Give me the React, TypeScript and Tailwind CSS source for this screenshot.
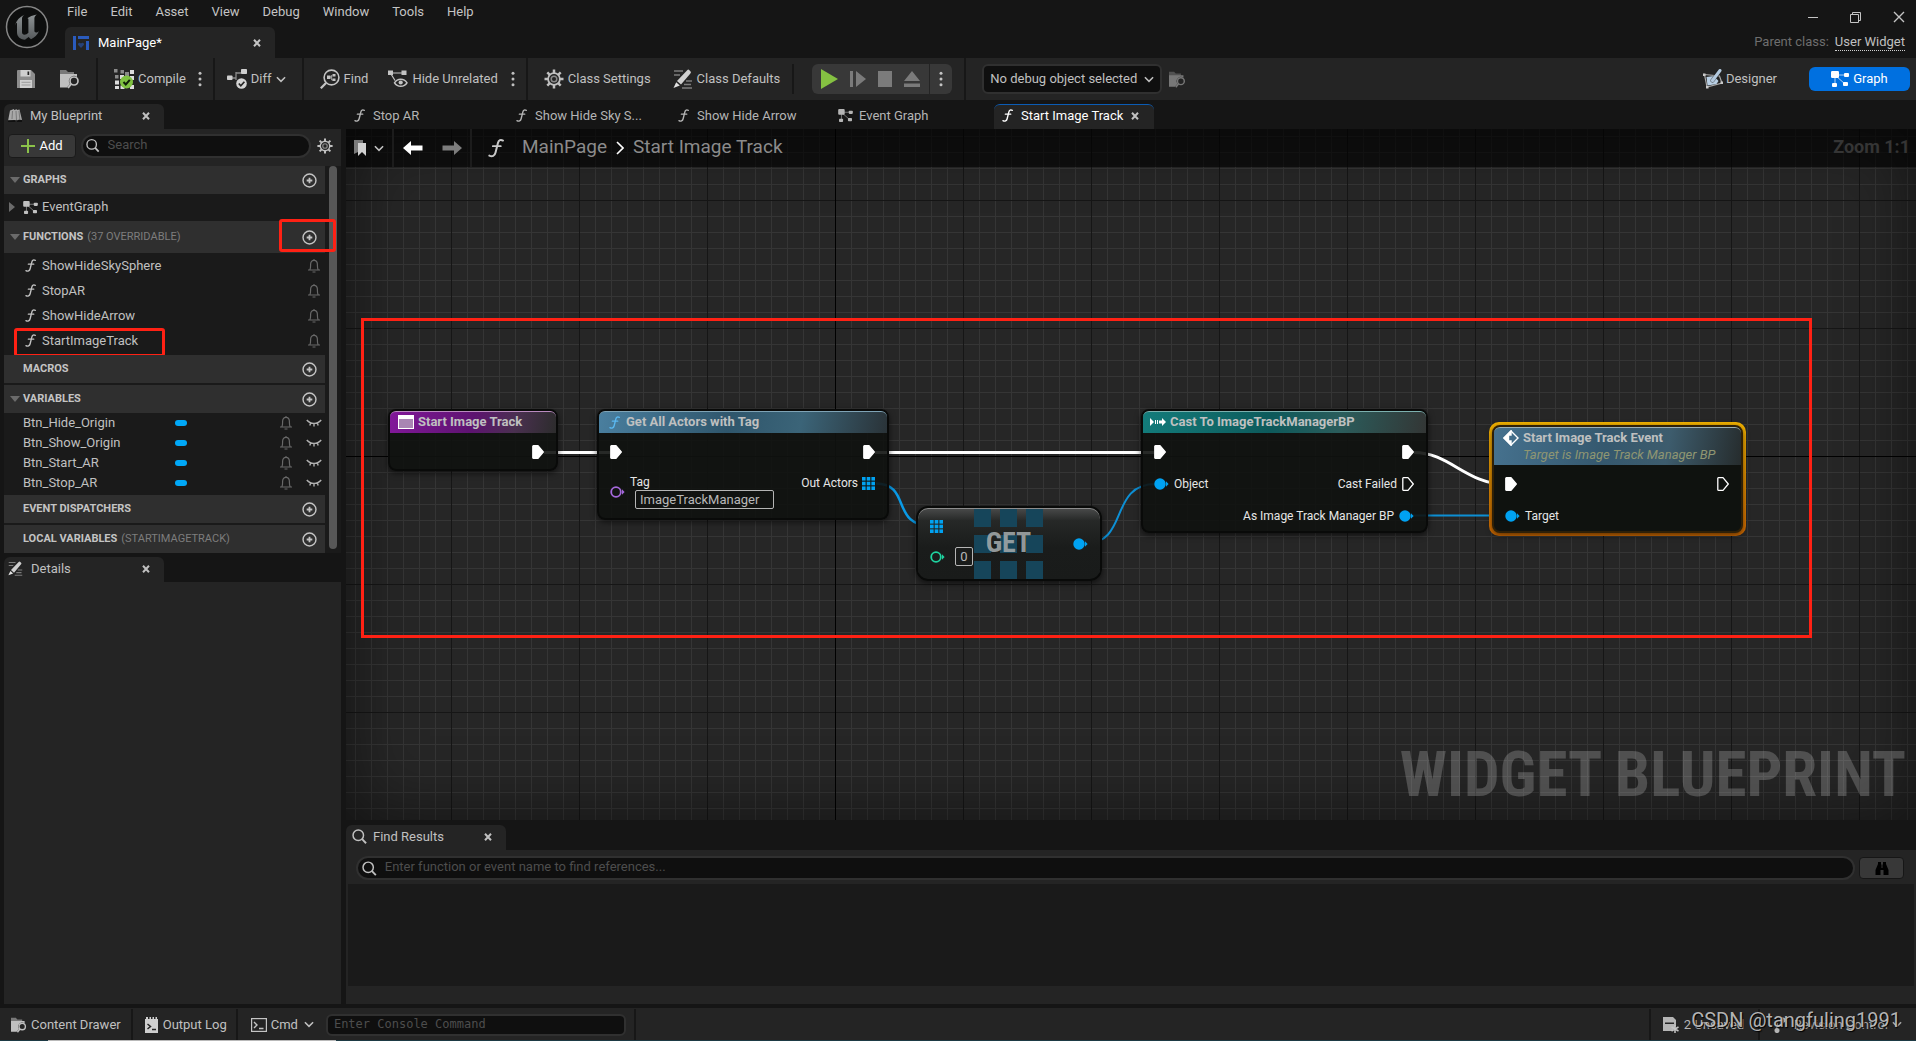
import React from "react";

type IconProps = { className?: string };

/* ---------- icons ---------- */

const Close = ({ className = "size-2" }: IconProps) => (
  <svg viewBox="0 0 8 8" className={className} stroke="currentColor" strokeWidth="2" fill="none">
    <path d="M1 .8 7 7.2M7 .8 1 7.2" />
  </svg>
);

const Chevron = ({ className = "w-[11px] h-[7px]" }: IconProps) => (
  <svg viewBox="0 0 11 7" className={className} stroke="currentColor" strokeWidth="1.7" fill="none">
    <path d="M1 1l4.5 4.5L10 1" />
  </svg>
);

const Dots = () => (
  <svg viewBox="0 0 4 16" className="w-1 h-4" fill="currentColor">
    <circle cx="2" cy="2.3" r="1.5" />
    <circle cx="2" cy="8" r="1.5" />
    <circle cx="2" cy="13.7" r="1.5" />
  </svg>
);

const FnIcon = ({ className = "w-[11px] h-[14px]" }: IconProps) => (
  <svg viewBox="0 0 12 14" className={className} fill="none" stroke="currentColor" strokeWidth="1.5" strokeLinecap="round">
    <path d="M11.2 1.4C9.600 .4 8 1 7.500 3L5.600 10.500C5 12.900 3.200 13.800 1 12.700" />
    <path d="M3.600 5.600h6" strokeWidth="1.3" />
  </svg>
);

const GraphIcon = ({ className = "w-4 h-[14px]" }: IconProps) => (
  <svg viewBox="0 0 18 16" className={className} fill="currentColor">
    <path d="M4 4v10M4 4h12M5 5l9 8" stroke="currentColor" strokeWidth="1" opacity=".7" />
    <rect x="0" y="0" width="8" height="7" rx="1.200" />
    <rect x="13" y="2" width="5" height="4" rx="1" />
    <rect x="1" y="12" width="5" height="4" rx="1" />
    <rect x="12" y="11" width="5" height="4" rx="1" />
  </svg>
);

const SearchIcon = ({ className = "size-4" }: IconProps) => (
  <svg viewBox="0 0 16 16" className={className} fill="none" stroke="currentColor" strokeWidth="1.6">
    <circle cx="6.700" cy="6.700" r="5.600" />
    <path d="M10.800 10.800 15 15.200" strokeWidth="2" />
  </svg>
);

const GearIcon = ({ className = "size-[18px]" }: IconProps) => (
  <svg viewBox="0 0 20 20" className={className} fill="none" stroke="currentColor">
    <circle cx="10" cy="10" r="5.900" strokeWidth="1.800" />
    <circle cx="10" cy="10" r="2.800" strokeWidth="1.500" opacity=".65" />
    <path
      strokeWidth="2.500"
      d="M10 .5V4M10 16v3.500M.5 10H4M16 10h3.500M3.300 3.300l2.500 2.500M14.200 14.200l2.500 2.500M16.700 3.300l-2.500 2.500M5.800 14.200l-2.500 2.500"
    />
  </svg>
);

const PlusCircle = ({ className = "size-[15px]" }: IconProps) => (
  <svg viewBox="0 0 16 16" className={className} fill="none" stroke="currentColor">
    <circle cx="8" cy="8" r="6.900" strokeWidth="1.500" />
    <path d="M8 5v6M5 8h6" strokeWidth="1.900" />
  </svg>
);

const SaveIcon = () => (
  <svg viewBox="0 0 18 18" className="size-[18px]">
    <path d="M1 0h13l4 4v14H0V1a1 1 0 0 1 1-1z" fill="#8d8d8d" />
    <path d="M3.500 0h10v6.500h-10zM3 10h12v8H3z" fill="#cfcfcf" />
    <path d="M10.500 1.500h1.700v3.500h-1.700z" fill="#242424" />
    <path d="M4.500 12.300h9M4.500 15h9" stroke="#9a9a9a" strokeWidth="1" />
  </svg>
);

const FolderSearch = ({ className = "size-5" }: IconProps) => (
  <svg viewBox="0 0 20 20" className={className} fill="none">
    <path d="M0 1h6l2 2h6v3H0z" fill="currentColor" opacity=".55" />
    <path d="M0 5h17v3a5 5 0 0 0-7 7l-3 3.500H0z" fill="currentColor" />
    <circle cx="14" cy="12" r="4" stroke="currentColor" strokeWidth="1.700" />
    <path d="M11.200 15 8 19" stroke="currentColor" strokeWidth="1.900" />
  </svg>
);

const CompileIcon = () => (
  <svg viewBox="0 0 20 20" className="size-5">
    <g fill="#8a8a8a">
      <path d="M0 0h3.500v3.500H0zM6.500 1h3.500v3.500H6.500zM1 6h3.500v3.500H1zM11 3h4v4h-4z" />
    </g>
    <g fill="#dcdcdc">
      <path d="M16 1h4v4h-4zM6 6h4v4H6zM1 11.500h4v4H1zM1 17h4v3H1zM6.500 16.500h4V20h-4zM16 7h4v4h-4zM16 16h4v4h-4z" />
    </g>
    <circle cx="12.500" cy="13" r="6.500" fill="#7fc241" />
    <path d="M9.500 13l2.300 2.500 4-4.600" stroke="#102008" strokeWidth="2" fill="none" />
  </svg>
);

const DiffIcon = () => (
  <svg viewBox="0 0 20 20" className="size-5" fill="none">
    <path d="M4 9h5M9 3v8M9 4h5" stroke="#8a8a8a" strokeWidth="1.300" />
    <rect x="0" y="6.500" width="5.500" height="4.500" rx=".8" fill="#cfcfcf" />
    <rect x="14" y="0" width="6" height="5" rx=".8" fill="#cfcfcf" />
    <circle cx="14.500" cy="14.500" r="5.300" fill="#d4d4d4" />
    <path d="M11.800 14.500l2 2.200 3.600-4" stroke="#242424" strokeWidth="1.700" />
  </svg>
);

const FindIcon = () => (
  <svg viewBox="0 0 20 20" className="size-5" fill="none" stroke="#c4c4c4">
    <circle cx="11.500" cy="8.500" r="7.400" strokeWidth="1.600" />
    <path d="M6 14 .8 19.300" strokeWidth="2.200" />
    <path d="M7 6.500h3.500v3.500H7zM12.500 5h3v2.500h-3zM12.500 9.500h3V12h-3z" fill="#c4c4c4" stroke="none" />
    <path d="M10 8h1.800M11.700 6v5h1" strokeWidth=".8" />
  </svg>
);

const HideIcon = () => (
  <svg viewBox="0 0 20 20" className="size-5" fill="none" stroke="#c4c4c4">
    <path d="M3 4h13M3 5l4 6.500" strokeWidth="1.200" />
    <path d="M0 1.500h5V6H0zM13.500 1.500h5V6h-5z" fill="#c4c4c4" stroke="none" />
    <path d="M6.500 13.800c3-4.600 9.500-4.600 12.500 0-3 4.600-9.500 4.600-12.500 0z" strokeWidth="1.500" />
    <circle cx="12.700" cy="13.500" r="2.100" fill="#c4c4c4" stroke="none" />
  </svg>
);

const PencilIcon = ({ className = "w-[19px] h-[19px]" }: IconProps) => (
  <svg viewBox="0 0 20 20" className={className} fill="none">
    <path d="M1 2h9M1 6h6M13 12h6M11 15.500h7M9 19h10" stroke="#7c7c7c" strokeWidth="1.400" />
    <path d="M4 12 14.200 1.200a1.500 1.500 0 0 1 2.200 0l1 1a1.500 1.500 0 0 1 0 2.200L8 15.500z" fill="#cfcfcf" />
    <path d="M3.200 13.300 6.800 16.500.5 19z" fill="#e2e2e2" />
  </svg>
);

const DesignerIcon = () => (
  <svg viewBox="0 0 20 20" className="size-5" fill="none">
    <path d="M1.500 5.500 16.500 7 19 14 4 18z" stroke="#a9a9a9" strokeWidth="1.200" />
    <path d="M3.500 8 11 7l4.500 5-2 3-9 1.500z" fill="#b8cfe4" />
    <path d="M9.500 11.500 17 1.200" stroke="#242424" strokeWidth="4.500" strokeLinecap="round" opacity=".5" />
    <path d="M9.500 11.500 17 1.500" stroke="#b3c9de" strokeWidth="3" strokeLinecap="round" />
    <path d="M0 4.500h2.500V7H0zM3 17h2.500v2.500H3zM17.500 12.500H20V15h-2.500z" fill="#c9c9c9" />
  </svg>
);

const BellIcon = () => (
  <svg viewBox="0 0 12 14" className="w-3 h-[14px] text-[#686868]" fill="none" stroke="currentColor" strokeWidth="1.200">
    <path d="M0 11h12M1.800 10.800C2.700 9.500 2.600 8 2.600 5.500 2.600 2.700 4 1.400 6 1.400s3.400 1.300 3.400 4.100c0 2.500-.1 4 .8 5.300M4.500 13h3M6 0v1.400" />
  </svg>
);

const LashIcon = () => (
  <svg viewBox="0 0 16 8" className="w-4 h-2 text-[#b0b0b0]" fill="none" stroke="currentColor" strokeWidth="1.400">
    <path d="M.8 1c3.500 4.500 10.900 4.500 14.400 0M8 4.500v3M4.800 3.800 3.800 6.500M11.200 3.800l1 2.700" />
  </svg>
);

const UnrealLogo = () => (
  <svg viewBox="0 0 44 46" className="w-11 h-[46px]">
    <defs>
      <linearGradient id="ue" x1="0" y1="0" x2="0" y2="1">
        <stop offset="0" stopColor="#8f9496" />
        <stop offset="1" stopColor="#55595b" />
      </linearGradient>
    </defs>
    <circle cx="22" cy="23" r="20.500" fill="#0d0e0e" stroke="#868686" strokeWidth="1.500" />
    <path
      fill="url(#ue)"
      d="M10 21.500c1.300-4.800 4.600-8.600 9.300-10.700-1.700 1.500-2.300 2.600-2.300 4v13.400c0 1.600 1 2.500 2.400 2.500 1.500 0 2.900-.8 4-2V15.600c0-.9-.6-1.400-1.500-1.200 2.700-1.700 5.900-3.400 9.900-4-1.800 1.300-2.400 2.500-2.400 4.200v12.200c0 1.200.7 1.700 1.600 1.700 1 0 2-.6 3-1.600-1.600 4-4.400 6.500-8 8.300l-2.400-2.300-3.600 2.900c-5.200-.5-8-3.400-8-7.600v-9.400c-.5-.3-1.200 1.100-2 2.700z"
    />
  </svg>
);

const MainPageIcon = () => (
  <svg viewBox="0 0 16 14" className="w-4 h-[14px]" fill="#2a5bbd">
    <path d="M0 0h3v14H0zM5 0h11v3H5zM13 5h3v9h-3z" />
    <path d="M8 12 5.200 9c-1-1.500 1.300-3.300 2.800-1.500 1.500-1.800 3.800 0 2.800 1.500z" opacity=".55" />
  </svg>
);

const BlueprintBook = () => (
  <svg viewBox="0 0 14 14" className="size-[14px]">
    <path d="M2 1.500 6 0v1L9 .2V1l2.500-.4L14 11l-3-.5-3 2.500-1.500-2L0 12z" fill="#a8a8a8" />
    <path d="M4.500 2 4 10M8 2l.5 9M11 2l.8 8" stroke="#6c6c6c" strokeWidth=".8" />
    <path d="M0 12h14" stroke="#0a0a0a" strokeWidth="1.500" />
  </svg>
);

const Triangle = ({ open }: { open?: boolean }) => (
  <svg viewBox="0 0 10 10" className="size-[10px] text-[#6b6b6b]" fill="currentColor">
    <path d={open ? "M0 2h10L5 8z" : "M2 0v10l6-5z"} />
  </svg>
);

/* ---------- pins ---------- */

const ExecPin = ({ hollow }: { hollow?: boolean }) => (
  <svg viewBox="0 0 12 14" className="w-3 h-[14px] shrink-0" fill={hollow ? "none" : "#fff"} stroke="#fff" strokeWidth="1.300" strokeLinejoin="round">
    <path d="M.8 1.300Q.8.7 1.400.7H6l5.300 6.300L6 13.300H1.400q-.6 0-.6-.6z" />
  </svg>
);

const DataPin = ({ tone = "text-[#00a2f2]", hollow }: { tone?: string; hollow?: boolean }) => (
  <svg viewBox="0 0 15 12" className={"w-[15px] h-3 shrink-0 " + tone} fill="none" stroke="currentColor">
    <circle cx="6" cy="6" r="4.800" strokeWidth="1.800" fill={hollow ? "none" : "currentColor"} />
    <path d="M12 3.200 14.600 6 12 8.800z" fill="currentColor" stroke="none" />
  </svg>
);

const ArrayPin = () => (
  <svg viewBox="0 0 13 13" className="size-[13px] shrink-0" fill="#00a2f2">
    {[0, 4.7, 9.4].map((y) => [0, 4.7, 9.4].map((x) => <rect key={x + "-" + y} x={x} y={y} width="3.600" height="3.600" />))}
  </svg>
);

/* ---------- left panel ---------- */

function SectionHeader({ title, note, open, tall, children }: { title: string; note?: string; open?: boolean; tall?: boolean; children?: React.ReactNode }) {
  return (
    <div className={(tall ? "h-8" : "h-7") + " relative flex items-center bg-[#2f2f2f] pl-[6px] pr-2 text-[11px]"}>
      <span className="w-[13px]">{open && <Triangle open />}</span>
      <h2 className="font-bold text-[#c4c4c4]">{title}</h2>
      {note && <span className="ml-1 text-[#7d7d7d]">{note}</span>}
      <button aria-label={"Add to " + title} className="ml-auto text-[#c4c4c4]">
        <PlusCircle />
      </button>
      {children}
    </div>
  );
}

const functions = ["ShowHideSkySphere", "StopAR", "ShowHideArrow", "StartImageTrack"];
const variables = ["Btn_Hide_Origin", "Btn_Show_Origin", "Btn_Start_AR", "Btn_Stop_AR"];

function LeftPanel() {
  return (
    <aside className="flex w-[341px] shrink-0 flex-col pl-1 pt-1">
      <div className="flex h-[25px] w-40 items-center rounded-t-md bg-[#242424] pb-[2px] pl-1 pr-[14px]">
        <BlueprintBook />
        <span className="ml-2 text-[#c0c0c0]">My Blueprint</span>
        <button aria-label="Close My Blueprint" className="ml-auto"><Close /></button>
      </div>
      <div className="flex h-[37px] items-center bg-[#242424] px-1 pb-[6px] pt-[2px]">
        <button className="flex h-6 w-[68px] items-center justify-center gap-1 rounded border border-[#1a1a1a] bg-[#383838] text-white">
          <svg viewBox="0 0 14 14" className="size-[14px]" stroke="#8bc24a" strokeWidth="2"><path d="M7 0v14M0 7h14" /></svg>
          Add
        </button>
        <label className="ml-[5px] flex h-6 flex-1 items-center rounded-full border-2 border-[#303030] bg-[#0f0f0f] pl-[3px]">
          <SearchIcon className="size-[15px]" />
          <input aria-label="Search" placeholder="Search" className="ml-2 w-full min-w-0 bg-transparent pb-px outline-none placeholder:text-[#4d4d4d]" />
        </label>
        <button aria-label="View options" className="ml-[6px] mr-1"><GearIcon className="size-4" /></button>
      </div>
      <div className="flex bg-[#1a1a1a]">
        <div className="flex-1">
          <SectionHeader title="GRAPHS" open />
          <div className="flex h-[27px] items-center pb-px pl-[3px]">
            <Triangle />
            <span className="ml-[6px]"><GraphIcon className="w-[15px] h-[13px]" /></span>
            <span className="ml-1">EventGraph</span>
          </div>
          <SectionHeader title="FUNCTIONS" note="(37 OVERRIDABLE)" open tall>
            <div className="absolute -right-[11px] -top-[2px] h-[33px] w-[57px] rounded-[3px] border-3 border-[#ff2114]" />
          </SectionHeader>
          <ul className="pb-[2px]">
            {functions.map((name) => (
              <li key={name} className="relative flex h-[25px] items-center pl-[21px] pr-[5px]">
                <FnIcon className="w-[11px] h-[13px]" />
                <span className="ml-[6px]">{name}</span>
                <span className="ml-auto"><BellIcon /></span>
                {name === "StartImageTrack" && (
                  <div className="absolute top-0 left-[10px] h-[29px] w-[151px] rounded-[3px] border-3 border-[#ff2114]" />
                )}
              </li>
            ))}
          </ul>
          <SectionHeader title="MACROS" />
          <div className="h-[2px]" />
          <SectionHeader title="VARIABLES" open />
          <ul className="pb-[2px]">
            {variables.map((name) => (
              <li key={name} className="flex h-5 items-center pl-[19px] pr-[3px]">
                <span className="w-[152px]">{name}</span>
                <span className="h-[6px] w-3 rounded-[3px] bg-[#00a8f8]" />
                <span className="ml-auto mr-[14px]"><BellIcon /></span>
                <LashIcon />
              </li>
            ))}
          </ul>
          <SectionHeader title="EVENT DISPATCHERS" />
          <div className="h-[2px]" />
          <SectionHeader title="LOCAL VARIABLES" note="(STARTIMAGETRACK)" />
        </div>
        <div className="w-4 px-1 pb-1">
          <div className="h-full w-2 rounded-full bg-[#575757]" />
        </div>
      </div>
      <div className="mt-1 flex h-[25px] w-40 items-center rounded-t-md bg-[#242424] pb-[2px] pl-1 pr-[14px]">
        <PencilIcon className="size-[15px]" />
        <span className="ml-2 text-[#c0c0c0]">Details</span>
        <button aria-label="Close Details" className="ml-auto"><Close /></button>
      </div>
      <div className="flex-1 bg-[#242424]" />
    </aside>
  );
}

/* ---------- graph ---------- */

function Node({ className, header, headClass, children }: { className: string; header: React.ReactNode; headClass: string; children?: React.ReactNode }) {
  return (
    <div className={"absolute rounded-lg border-2 border-[#090a09] bg-[#0f120f]/90 shadow-[0_2px_6px_rgba(0,0,0,0.6)] " + className}>
      <div className={"rounded-t-md border-t font-bold text-[#bfc0c0] " + headClass}>{header}</div>
      <div className="pt-[3px]">{children}</div>
    </div>
  );
}

const Row = ({ children }: { children: React.ReactNode }) => (
  <div className="flex h-8 items-center justify-between pl-[11px] pr-3 text-xs text-[#e6e6e6]">{children}</div>
);

function Canvas() {
  return (
    <section aria-label="Graph" className="relative flex-1 overflow-hidden bg-[#262626]">
      <div
        className="absolute inset-0 bg-[linear-gradient(#161616_1px,transparent_1px),linear-gradient(90deg,#161616_1px,transparent_1px),linear-gradient(#353535_1px,transparent_1px),linear-gradient(90deg,#353535_1px,transparent_1px)] bg-[size:128px_128px,128px_128px,16px_16px,16px_16px] bg-[position:105px_71px,105px_71px,9px_7px,9px_7px]"
      />
      <div className="absolute inset-x-0 top-[327px] h-px bg-black" />
      <div className="absolute inset-y-0 left-[489px] w-px bg-black" />
      <div className="absolute inset-0 shadow-[inset_0_0_70px_rgba(0,0,0,0.55)]" />
      <p className="absolute bottom-[14px] right-[10px] text-[63px] font-bold leading-none text-white/20 [font-family:'Roboto_Condensed','Liberation_Sans_Narrow','Roboto',sans-serif]">
        WIDGET BLUEPRINT
      </p>

      <svg className="absolute inset-0 size-full" fill="none">
        <g transform="translate(-346 -129)">
          <path d="M544 452.500H610M875 452.500H1154M1414 452.500C1450 452.500 1466 484.500 1507 484.500" stroke="#fff" strokeWidth="3" />
          <path d="M876 483.500C912 484 890 526 932 526" stroke="#0a9ae6" strokeWidth="2.500" />
          <path d="M1085 543.500C1130 543.500 1108 484 1156 484M1413 515.500H1507" stroke="#0d8fd4" strokeWidth="2" />
        </g>
      </svg>

      <Node
        className="left-[42px] top-[280px] h-[62px] w-[170px]"
        headClass="h-[22px] border-[#b98abf] bg-[linear-gradient(100deg,#82189a_0%,#5d1370_50%,#4a3050_75%,#2c2c2c_100%)]"
        header={
          <div className="flex h-5 items-center pl-2">
            <svg viewBox="0 0 16 14" className="w-4 h-[14px]"><rect x=".5" y=".5" width="15" height="13" fill="#a985b3" stroke="#fff" /><path d="M0 0h16v4H0z" fill="#fff" /></svg>
            <span className="ml-1">Start Image Track</span>
          </div>
        }
      >
        <Row><span /><ExecPin /></Row>
      </Node>

      <Node
        className="left-[251px] top-[280px] h-[111px] w-[292px]"
        headClass="h-[22px] border-[#7fa3b5] bg-[linear-gradient(100deg,#4a7f9f_0%,#2f566c_45%,#3b6478_70%,#2a3338_100%)]"
        header={
          <div className="flex h-5 items-center pl-[10px]">
            <FnIcon className="w-[11px] h-[13px] text-[#5bb8f0]" />
            <span className="ml-[6px]">Get All Actors with Tag</span>
          </div>
        }
      >
        <Row><ExecPin /><ExecPin /></Row>
        <div className="flex h-[46px] justify-between pl-[11px] pr-3 text-xs text-[#e6e6e6]">
          <div className="flex">
            <span className="mt-[18px]"><DataPin tone="text-[#a569dc]" hollow /></span>
            <label className="ml-[5px] flex flex-col pt-[7px]">
              <span className="leading-[15px]">Tag</span>
              <input
                defaultValue="ImageTrackManager"
                className="ml-[5px] h-[19px] w-[139px] rounded-xs border border-[#b5b5b5] bg-transparent px-1 text-[13px] text-[#b8b8b8] outline-none"
              />
            </label>
          </div>
          <div className="flex h-[30px] items-center gap-1">Out Actors <ArrayPin /></div>
        </div>
      </Node>

      <Node
        className="left-[795px] top-[280px] h-[124px] w-[287px]"
        headClass="h-[22px] border-[#7cb0ae] bg-[linear-gradient(100deg,#137c7b_0%,#0d5a5b_45%,#2b5c5b_70%,#333635_100%)]"
        header={
          <div className="flex h-5 items-center pl-[7px]">
            <svg viewBox="0 0 16 10" className="w-4 h-[10px]" fill="#fff"><path d="M0 1l4 4-4 4zM5 3h1v4H5zM7 3h1v4H7zM9 3.500h3V1l4 4-4 4V6.500H9z" /></svg>
            <span className="ml-1">Cast To ImageTrackManagerBP</span>
          </div>
        }
      >
        <Row><ExecPin /><ExecPin /></Row>
        <Row>
          <span className="flex items-center gap-[5px]"><DataPin />Object</span>
          <span className="flex items-center gap-[5px]">Cast Failed <ExecPin hollow /></span>
        </Row>
        <Row><span /><span className="flex items-center gap-[5px]">As Image Track Manager BP <DataPin /></span></Row>
      </Node>

      <div className="absolute left-[570px] top-[377px] flex h-[75px] w-[186px] items-center justify-between rounded-xl border-2 border-[#090a09] bg-[linear-gradient(#4a4b4b_0%,#262827_18%,#1a1c1b_55%,#191b1a_100%)] px-3 shadow-[inset_0_1px_0_#8c8c8c,0_2px_6px_rgba(0,0,0,0.6)]">
        <div className="flex flex-col gap-[14px] pb-px">
          <ArrayPin />
          <label className="flex items-center gap-[10px]">
            <DataPin tone="text-[#1fd3a0]" hollow />
            <input aria-label="Index" defaultValue="0" className="h-[19px] w-[18px] rounded-xs border border-[#b5b5b5] bg-transparent text-center text-[#b8b8b8] outline-none" />
          </label>
        </div>
        <DataPin />
        <div className="absolute left-[56px] top-px grid grid-cols-3 gap-x-[9px] gap-y-[8px]">
          {Array.from({ length: 9 }, (_, i) => <span key={i} className="h-[18px] w-[17px] bg-[#16455a]" />)}
        </div>
        <span className="absolute left-[56px] top-[19px] w-[69px] text-center text-[28px] font-bold leading-8 text-[#a3a9ab]/90 [font-family:'Roboto_Condensed','Liberation_Sans_Narrow','Roboto',sans-serif]">GET</span>
      </div>

      <div className="absolute left-[1143px] top-[293px] h-[114px] w-[257px] rounded-[10px] bg-[linear-gradient(#f5b400,#d16a00)]" />
      <Node
        className="left-[1146px] top-[296px] h-[108px] w-[251px] !border-[#2e2008] !bg-[#0f120f]"
        headClass="h-[38px] border-[#9db0b5] bg-[linear-gradient(100deg,#46728f_0%,#35586e_45%,#3d5c6d_70%,#262c2d_100%)]"
        header={
          <div className="flex pl-[9px] pt-px">
            <svg viewBox="0 0 16 16" className="mt-px size-4" fill="none" stroke="#fff" strokeWidth="1.400"><path d="M8 1l7 7-7 7-7-7z" /><path d="M8 1v4H5.500v6H8v4L1 8z" fill="#fff" /></svg>
            <div className="ml-1 leading-[17px]">
              <div>Start Image Track Event</div>
              <div className="font-normal italic text-[#8f9672]">Target is Image Track Manager BP</div>
            </div>
          </div>
        }
      >
        <Row><ExecPin /><ExecPin hollow /></Row>
        <Row><span className="flex items-center gap-[5px]"><DataPin />Target</span></Row>
      </Node>

      <div className="absolute left-[15px] top-[189px] h-[320px] w-[1451px] border-3 border-[#ff2114]" />

      <div className="absolute inset-x-0 top-0 flex h-[38px] items-center bg-black/60 pl-2 pr-[6px] text-[19px] text-[#8b8b8b]">
        <button aria-label="Bookmarks" className="flex items-center gap-2 text-[#c4c4c4]">
          <svg viewBox="0 0 12 16" className="w-3 h-4"><path d="M0 0h9v3H4v9l-4 2z" fill="#7a7a7a" /><path d="M4 3h8v13l-4-4-4 4z" fill="#d0d0d0" /></svg>
          <Chevron className="w-[10px] h-[7px]" />
        </button>
        <span className="ml-2 mr-[9px] h-full w-[2px] bg-[#1c1c1c]" />
        <button aria-label="Back" className="text-white">
          <svg viewBox="0 0 20 14" className="w-5 h-[14px]" fill="currentColor"><path d="M0 7l8-7v4.500h11.500v5H8V14z" /></svg>
        </button>
        <button aria-label="Forward" className="ml-[19px] text-[#7d7d7d]">
          <svg viewBox="0 0 20 14" className="w-5 h-[14px]" fill="currentColor"><path d="M20 7l-8-7v4.500H.5v5H12V14z" /></svg>
        </button>
        <span className="ml-2 mr-4 h-full w-[2px] bg-[#1c1c1c]" />
        <FnIcon className="w-4 h-5 text-[#c9c9c9]" />
        <div className="ml-[18px] flex items-center pb-[2px]">
          <a href="#main">MainPage</a>
          <svg viewBox="0 0 8 14" className="mx-[9px] mt-[2px] h-[14px] w-2" fill="none" stroke="#fff" strokeWidth="1.600"><path d="M1 1l6 6-6 6" /></svg>
          <span>Start Image Track</span>
        </div>
        <span className="ml-auto pb-[2px] text-lg font-bold text-[#353535]">Zoom 1:1</span>
      </div>
    </section>
  );
}

const tabs = [
  { label: "Stop AR", fn: true },
  { label: "Show Hide Sky S...", fn: true },
  { label: "Show Hide Arrow", fn: true },
  { label: "Event Graph", fn: false },
];

function Center() {
  return (
    <main className="ml-[5px] flex min-w-0 flex-1 flex-col">
      <nav className="flex h-[29px] items-end gap-[2px] text-[#b4b4b4]">
        {tabs.map((t) => (
          <button key={t.label} className="flex h-[25px] w-40 items-center pb-[2px] pl-[6px] text-left">
            <span className="w-[21px]">{t.fn ? <FnIcon className="ml-[2px] w-[11px] h-[13px]" /> : <GraphIcon className="w-[15px] h-[13px]" />}</span>
            {t.label}
          </button>
        ))}
        <button className="flex h-[25px] w-40 items-center rounded-t-md border-t border-[#0b5cb5] bg-[#242424] pb-[3px] pl-[6px] text-left text-white">
          <span className="w-[21px]"><FnIcon className="ml-[2px] w-[11px] h-[13px]" /></span>
          Start Image Track
          <span className="ml-2 text-[#c0c0c0]"><Close /></span>
        </button>
      </nav>
      <Canvas />
      <section className="mt-[5px]">
        <div className="flex h-[25px] w-40 items-center rounded-t-md bg-[#242424] pb-[2px] pl-[6px] pr-[14px]">
          <SearchIcon className="size-[15px]" />
          <span className="ml-[6px]">Find Results</span>
          <button aria-label="Close Find Results" className="ml-auto"><Close /></button>
        </div>
        <div className="bg-[#242424] pb-[18px] pl-[2px] pr-[2px] pt-[6px]">
          <div className="flex items-center pl-2 pr-[10px]">
            <label className="flex h-6 flex-1 items-center rounded-full border-2 border-[#303030] bg-[#0f0f0f] pl-1">
              <SearchIcon className="size-[15px]" />
              <input
                aria-label="Find references"
                placeholder="Enter function or event name to find references..."
                className="ml-2 w-full bg-transparent pb-[2px] outline-none placeholder:text-[#4d4d4d]"
              />
            </label>
            <button aria-label="Find in all blueprints" className="ml-1 flex h-[22px] w-[45px] items-center justify-center rounded border border-[#161616] bg-[#383838]">
              <svg viewBox="0 0 14 13" className="w-[14px] h-[13px]" fill="#000"><path d="M3 0h3v2l.5 1v3h1V3L8 2V0h3v2l2.500 6v5H8.500V8h-3v5H.5V8L3 2z" /></svg>
            </button>
          </div>
          <div className="mt-1 h-[102px] bg-[#1a1a1a]" />
        </div>
      </section>
    </main>
  );
}

/* ---------- bars ---------- */

const Sep = ({ className = "" }: IconProps) => <span className={"w-[2px] self-stretch bg-[#171717] " + className} />;

function TitleBar() {
  return (
    <header className="flex h-[58px] shrink-0 justify-between">
      <div className="flex">
        <div className="flex w-[55px] pl-[5px] pt-1"><UnrealLogo /></div>
        <div className="flex flex-col justify-between">
          <nav className="flex h-6 items-center text-[#c4c4c4]">
            {["File", "Edit", "Asset", "View", "Debug", "Window", "Tools", "Help"].map((m) => (
              <button key={m} className="pl-[11px] pr-3 first:pl-3">{m}</button>
            ))}
          </nav>
          <div className="ml-[10px] flex h-[31px] w-[210px] items-center rounded-t-md bg-[#242424] pl-2 pr-[14px] text-white">
            <MainPageIcon />
            <span className="ml-[9px]">MainPage*</span>
            <button aria-label="Close MainPage" className="ml-auto text-[#c4c4c4]"><Close /></button>
          </div>
        </div>
      </div>
      <div className="flex flex-col items-end pr-[11px]">
        <div className="flex h-[34px] items-center gap-8 text-[#c4c4c4]">
          <button aria-label="Minimize"><svg viewBox="0 0 10 10" className="size-[10px]" stroke="currentColor"><path d="M0 5.500h10" /></svg></button>
          <button aria-label="Restore"><svg viewBox="0 0 11 11" className="size-[11px]" fill="none" stroke="currentColor"><path d="M.5 2.500h8v8h-8zM2.500 2V.5h8v8H9" /></svg></button>
          <button aria-label="Close"><svg viewBox="0 0 12 12" className="size-3" stroke="currentColor" strokeWidth="1.400"><path d="M1 1l10 10M11 1 1 11" /></svg></button>
        </div>
        <div className="flex gap-[6px] leading-4">
          <span className="text-[#6e6e6e]">Parent class:</span>
          <a href="#parent" className="border-b border-dotted border-[#d0d0d0]">User Widget</a>
        </div>
      </div>
    </header>
  );
}

function Toolbar() {
  return (
    <div className="flex h-[42px] shrink-0 items-center bg-[#242424] pl-[17px] pr-[6px]">
      <button aria-label="Save"><SaveIcon /></button>
      <button aria-label="Browse" className="ml-[25px]"><FolderSearch /></button>
      <Sep className="ml-4" />
      <button className="ml-4 flex items-center gap-1"><CompileIcon />Compile</button>
      <button aria-label="Compile options" className="ml-3"><Dots /></button>
      <Sep className="ml-[11px]" />
      <button className="ml-3 flex items-center gap-1"><DiffIcon />Diff<Chevron className="w-[10px] h-[7px]" /></button>
      <Sep className="ml-4" />
      <button className="ml-4 flex items-center gap-1"><FindIcon />Find</button>
      <button className="ml-5 flex items-center gap-1"><HideIcon />Hide Unrelated</button>
      <button aria-label="Hide options" className="ml-[13px]"><Dots /></button>
      <Sep className="ml-[11px]" />
      <button className="ml-4 flex items-center gap-1"><GearIcon className="size-5" />Class Settings</button>
      <button className="ml-[22px] flex items-center gap-1"><PencilIcon className="size-5" />Class Defaults</button>
      <Sep className="my-[6px] ml-3" />
      <div className="ml-[18px] flex h-[30px] items-center rounded-md bg-[#383838] text-[#7b7b7b]">
        <button aria-label="Play" className="ml-[9px]"><svg viewBox="0 0 17 20" className="w-[17px] h-5" fill="#85c142"><path d="M0 0l17 10L0 20z" /></svg></button>
        <button aria-label="Step" className="ml-3"><svg viewBox="0 0 16 16" className="size-4" fill="currentColor"><path d="M0 0h3v16H0zM6 0l10 8-10 8z" /></svg></button>
        <button aria-label="Stop" className="ml-3"><svg viewBox="0 0 14 16" className="w-[14px] h-4" fill="currentColor"><path d="M0 0h14v16H0z" /></svg></button>
        <button aria-label="Eject" className="ml-3"><svg viewBox="0 0 16 16" className="size-4" fill="currentColor"><path d="M8 0l8 10H0zM0 12.500h16V16H0z" /></svg></button>
        <span className="ml-[9px] h-full w-px bg-[#242424]" />
        <button aria-label="Play options" className="mx-[9px] text-[#c4c4c4]"><Dots /></button>
      </div>
      <Sep className="ml-3" />
      <button className="ml-4 flex h-[30px] w-[180px] items-center justify-between rounded-md border-2 border-[#303030] bg-[#0f0f0f] px-[6px]">
        No debug object selected<Chevron className="w-[10px] h-[7px]" />
      </button>
      <button aria-label="Browse debug object" className="ml-[7px] text-[#777]"><FolderSearch className="size-[17px]" /></button>
      <button className="ml-auto flex items-center gap-[3px]"><DesignerIcon />Designer</button>
      <button className="ml-8 flex h-6 w-[101px] items-center justify-center gap-1 rounded-md bg-[#0070e0] text-white">
        <GraphIcon className="w-[18px] h-4" />Graph
      </button>
    </div>
  );
}

function StatusBar() {
  return (
    <footer className="relative mt-1 flex h-8 shrink-0 items-center bg-[#242424] pl-[11px] pt-px">
      <button className="flex items-center gap-1"><FolderSearch className="size-4" />Content Drawer</button>
      <Sep className="ml-[10px]" />
      <button className="ml-3 flex items-center gap-[5px]">
        <svg viewBox="0 0 13 16" className="w-[13px] h-4"><path d="M0 2h1V0h2v2h1.500V0h1.500v2h1.500V0H9v2h1.500V0H12v2h1v14H0z" fill="#cfcfcf" /><path d="M2.500 7l3 2.500-3 2.500M7 12.500h4" stroke="#242424" strokeWidth="1.500" fill="none" /></svg>
        Output Log
      </button>
      <Sep className="ml-[9px]" />
      <button className="ml-[13px] flex items-center gap-1">
        <svg viewBox="0 0 16 14" className="w-4 h-[14px]" fill="none" stroke="#c4c4c4"><rect x=".6" y=".6" width="14.800" height="12.800" strokeWidth="1.200" /><path d="M3 4l3 3-3 3M8 10.500h4.500" strokeWidth="1.400" /></svg>
        Cmd
        <Chevron className="ml-[2px] w-[10px] h-[7px]" />
      </button>
      <input
        aria-label="Console command"
        placeholder="Enter Console Command"
        className="ml-3 h-[22px] w-[300px] rounded-md border-2 border-[#303030] bg-[#0f0f0f] px-[6px] pb-px text-xs outline-none [font-family:'DejaVu_Sans_Mono','Liberation_Mono',monospace] placeholder:text-[#4d4d4d]"
      />
      <Sep className="ml-2" />
      <Sep className="ml-auto" />
      <button className="ml-3 flex w-[95px] items-center gap-[5px] text-[#b5b5b5]">
        <svg viewBox="0 0 16 16" className="size-4"><path d="M0 0h10l3 3v6l-4 5H0z" fill="#b5b5b5" /><path d="M2 5.500h9v1.500H2z" fill="#242424" /><path d="M12 8v8M8.500 10l7 4M15.500 10l-7 4" stroke="#c4c4c4" strokeWidth="1.500" /></svg>
        2 Unsaved
      </button>
      <Sep />
      <button className="ml-[14px] mr-[14px] flex items-center text-[#a5a5a5]">
        <svg viewBox="0 0 12 16" className="mr-2 w-3 h-4" fill="none" stroke="#b5b5b5" strokeWidth="1.500"><path d="M3 13V5M3 9c4 0 6-1 6-5" /><circle cx="3" cy="13.500" r="1.800" fill="#b5b5b5" /><circle cx="9" cy="3" r="1.800" fill="#b5b5b5" /></svg>
        Revision Control
        <Chevron className="ml-1 w-[10px] h-[7px]" />
      </button>
      <span className="absolute right-[15px] top-0 text-xl leading-6 text-[#c9c9c9]/90 [text-shadow:1px_1px_1px_#000]">CSDN @tangfuling1991</span>
    </footer>
  );
}

export default function App() {
  return (
    <div className="flex h-screen flex-col overflow-hidden bg-[#151515] text-[13px] leading-4 text-[#c0c0c0] [font-family:Roboto,'Noto_Sans',sans-serif]">
      <TitleBar />
      <Toolbar />
      <div className="flex min-h-0 flex-1">
        <LeftPanel />
        <Center />
      </div>
      <StatusBar />
      <div className="flex h-px shrink-0 bg-[#1d3a44]"><span className="ml-12 w-72 bg-[#b9b9b9]" /></div>
    </div>
  );
}
